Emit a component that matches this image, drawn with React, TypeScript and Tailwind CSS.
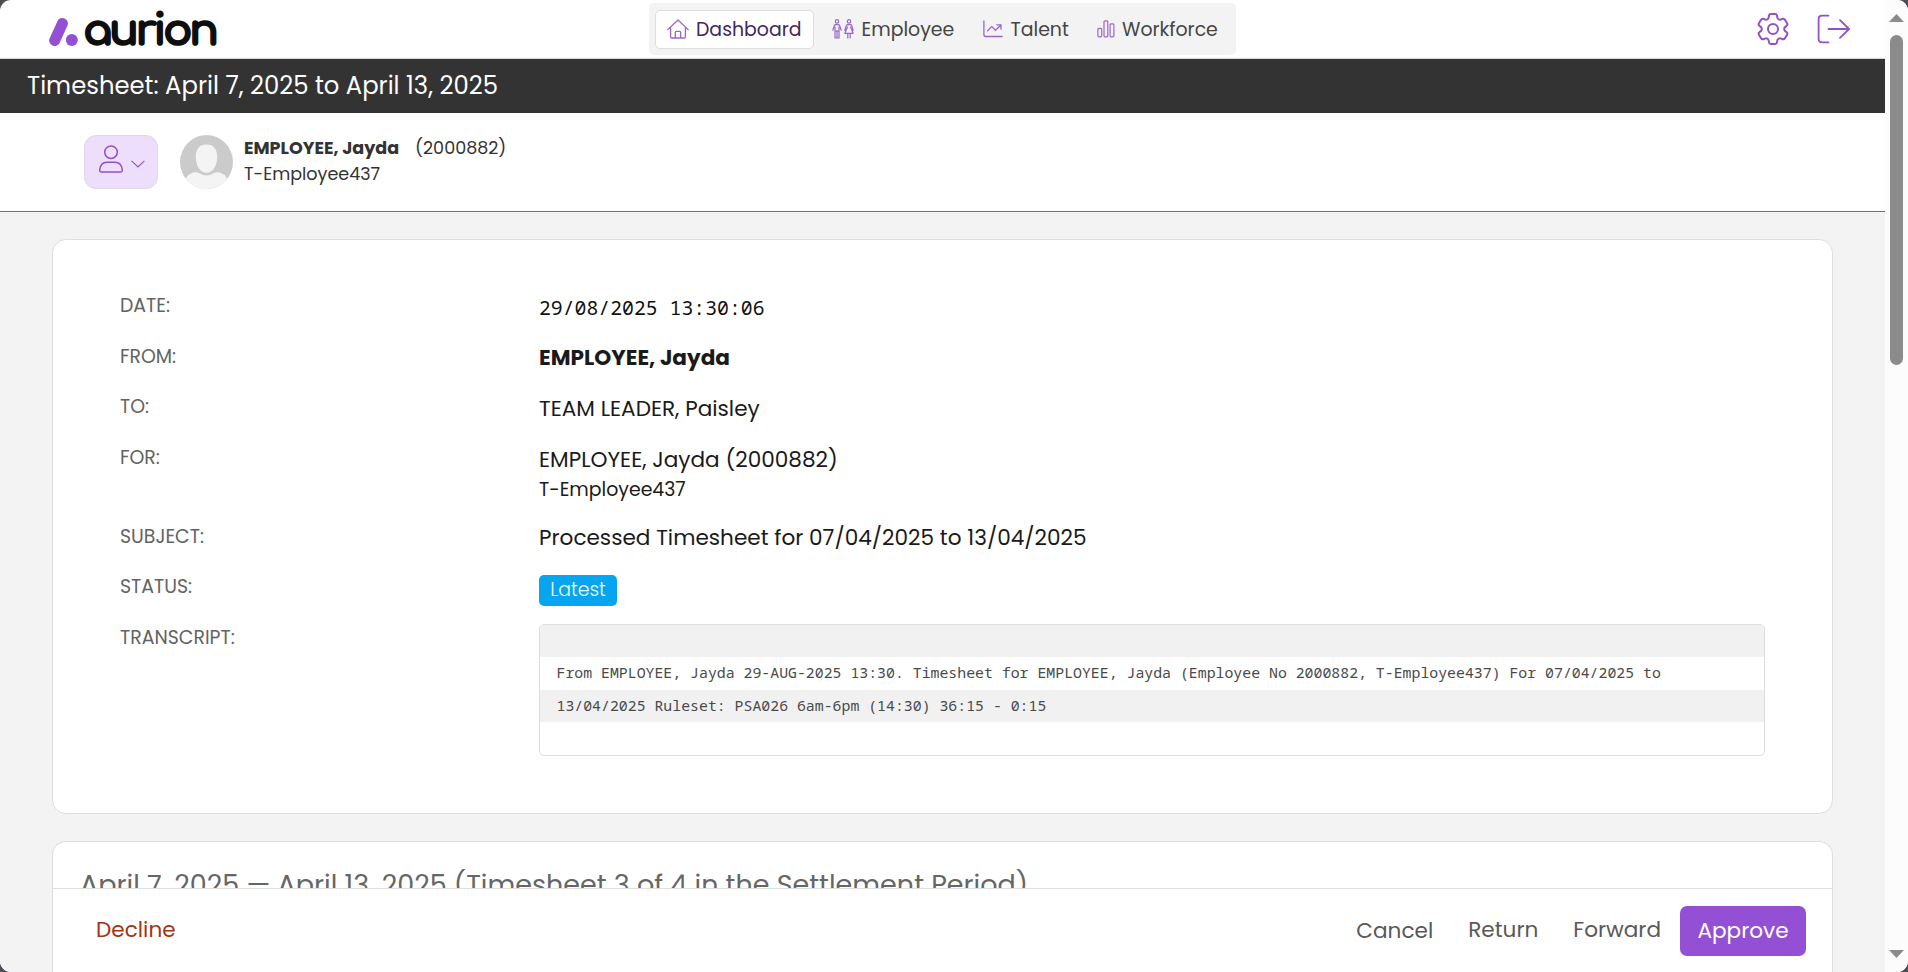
import type { ReactNode } from "react";
import { HiOutlineCog6Tooth } from "react-icons/hi2";

const HomeIcon = () => (
  <svg width="22" height="20" viewBox="0 0 22 20" fill="none" stroke="#9b66cc" strokeWidth="1.3" strokeLinejoin="round" strokeLinecap="round">
    <path d="M.8 10.6 11 1l10.2 9.6M3.6 8.6v9.2q0 1.2 1.2 1.2h12.4q1.2 0 1.2-1.2V8.6M8.3 19v-5.6q0-1 1-1h3.4q1 0 1 1V19" />
  </svg>
);

const PeopleIcon = () => (
  <svg width="22" height="20" viewBox="0 0 22 20" fill="none" stroke="#9b66cc" strokeWidth="1.2" strokeLinejoin="round" strokeLinecap="round">
    <circle cx="5" cy="2.4" r="1.7" />
    <circle cx="17" cy="2.4" r="1.7" />
    <path d="M.8 11.2 2.3 6.6q.4-1 1.4-1h2.6q1 0 1.4 1l1.5 4.6M3 8v11M7 8v11M5 12.4V19M3 12.2h4M3 19h4" />
    <path d="m12.8 11.2 1.5-4.6q.4-1 1.4-1h2.6q1 0 1.4 1l1.5 4.6M15.4 8l-2.6 6.4h8.4L18.6 8M15.8 14.6V19M18.2 14.6V19" />
  </svg>
);

const TrendIcon = () => (
  <svg width="20" height="18" viewBox="0 0 20 18" fill="none" stroke="#9b66cc" strokeWidth="1.3" strokeLinejoin="round" strokeLinecap="round">
    <path d="M.9.9v13.6q0 2 2 2h16.2M4.6 10.8l4-4.2 3.9 3.6L18 5M13.8 4.8H18v4.4" />
  </svg>
);

const BarsIcon = () => (
  <svg width="18" height="18" viewBox="0 0 18 18" fill="none" stroke="#9b66cc" strokeWidth="1.2">
    <rect x=".9" y="8.4" width="3.8" height="8.4" rx="1" />
    <rect x="7" y=".9" width="3.8" height="15.9" rx="1" />
    <rect x="13.1" y="3.9" width="3.8" height="12.9" rx="1" />
  </svg>
);

const LogoutIcon = () => (
  <svg width="34" height="30" viewBox="0 0 34 30" fill="none" stroke="#9450c8" strokeWidth="1.8" strokeLinejoin="round" strokeLinecap="round">
    <path d="M11.5 1.6H5.2q-3.6 0-3.6 3.6v19.6q0 3.6 3.6 3.6h6.3M11.5 15h20.6M23 6.2l9.1 8.8-9.1 8.8" />
  </svg>
);

const PersonIcon = () => (
  <svg width="24" height="28" viewBox="0 0 24 28" fill="none" stroke="#9450c8" strokeWidth="1.5" strokeLinejoin="round">
    <circle cx="12" cy="7.2" r="6.3" />
    <path d="M7.8 17.2h8.4q6 0 7 7.2.4 2.6-1.8 2.6H2.6q-2.2 0-1.8-2.6 1-7.2 7-7.2Z" />
  </svg>
);

const Avatar = () => (
  <svg width="53" height="54" viewBox="0 0 53 54">
    <defs>
      <clipPath id="avatar-clip">
        <ellipse cx="26.5" cy="27" rx="26.5" ry="27" />
      </clipPath>
    </defs>
    <g clipPath="url(#avatar-clip)">
      <rect width="53" height="54" fill="#cbcbcb" />
      <path d="M2 54Q5 40 13 37.4q4-.8 7 1.2 3 2 6.5 2t6.5-2q3-2 7-1.2Q48 40 51 54Z" fill="#f4f4f4" />
      <path d="M26.5 9.500c-7 0-10.700 4.600-10.700 12.200 0 8.600 4.200 16 10.700 16s10.700-7.400 10.700-16c0-7.600-3.700-12.200-10.700-12.200Z" fill="#f4f4f4" />
    </g>
  </svg>
);

const Row = ({ label, className, children }: { label: string; className: string; children: ReactNode }) => (
  <div className={`flex items-start ${className}`}>
    <div className="w-[419px] shrink-0 pt-px text-[18.9px] leading-[28px] text-[#636363]">{label}</div>
    <div className="flex-1 text-[21.6px] leading-[32px] text-[#1a1a1a]">{children}</div>
  </div>
);

export default function App() {
  return (
    <div className="h-[972px] w-[1908px] overflow-hidden bg-[#4c4c52] font-['Poppins',Inter,sans-serif]">
      <div className="flex h-full w-full overflow-hidden rounded-[11px] bg-white">
        <div className="flex h-full w-[1885px] flex-col">
          <header className="flex h-[59px] shrink-0 items-center border-b border-[#d6d6d6]">
            <div className="flex h-full w-[649px] items-center gap-[5px] pl-[49px]">
              <svg width="29" height="30" viewBox="0 0 29 30" className="mt-[6px]">
                <path d="M13.4 6.5 5.7 23.5" stroke="#9450d4" strokeWidth="11" strokeLinecap="round" />
                <circle cx="22.8" cy="23" r="6" fill="#9450d4" />
              </svg>
              <span className="mt-[4px] text-[44px] leading-[44px] font-bold tracking-[-3.6px] text-[#0e0e0e] [-webkit-text-stroke:1.6px_#0e0e0e] font-['Comfortaa','Quicksand',sans-serif]">
                aurion
              </span>
            </div>
            <nav className="flex h-[52px] w-[587px] items-center rounded-[5px] bg-[#f3f3f3] pl-[6px] text-[18.9px] text-[#444] [&_span]:mt-[2px]">
              <div className="flex h-[39px] w-[159px] items-center gap-[7px] rounded-[5px] border border-[#dedede] bg-white pl-[11px] text-[#44265c]">
                <HomeIcon />
                <span>Dashboard</span>
              </div>
              <div className="ml-[6px] flex w-[146px] items-center gap-[7.5px] pl-[12px]">
                <PeopleIcon />
                <span>Employee</span>
              </div>
              <div className="ml-[5px] flex w-[109px] items-center gap-[7.5px] pl-[12px]">
                <TrendIcon />
                <span>Talent</span>
              </div>
              <div className="ml-[5px] flex items-center gap-[7px] pl-[12px]">
                <BarsIcon />
                <span>Workforce</span>
              </div>
            </nav>
            <div className="flex flex-1 items-center justify-end gap-[24px] pr-[34px]">
              <HiOutlineCog6Tooth className="size-[40px] text-[#9450c8] [&_path]:[stroke-width:1.2]" />
              <LogoutIcon />
            </div>
          </header>

          <h1 className="flex h-[54px] shrink-0 items-center bg-[#333] pl-[27px] text-[24.3px] text-white">
            Timesheet: April 7, 2025 to April 13, 2025
          </h1>

          <section className="flex h-[99px] shrink-0 items-center border-b border-[#85639f] bg-white pl-[84px]">
            <button className="flex h-[54px] w-[74px] items-center gap-[8px] rounded-[12px] border border-[#dfd8e8] bg-[#eddffb] pl-[14px]">
              <span className="mb-[7px]">
                <PersonIcon />
              </span>
              <svg width="14" height="8" viewBox="0 0 14 8" fill="none" stroke="#9450c8" strokeWidth="1.1" className="mt-[4px]">
                <path d="m.6.8 6.4 6.2L13.4.8" />
              </svg>
            </button>
            <div className="ml-[22px]">
              <Avatar />
            </div>
            <div className="mb-[2px] ml-[11px] text-[17.55px] leading-[26px] text-[#333]">
              <div className="flex gap-[16px]">
                <span className="font-bold">EMPLOYEE, Jayda</span>
                <span>(2000882)</span>
              </div>
              <div>T-Employee437</div>
            </div>
          </section>

          <main className="flex min-h-0 flex-1 flex-col gap-[27px] bg-[#f3f3f3] px-[52px] pt-[27px]">
            <section className="h-[575px] shrink-0 rounded-[14px] border border-[#dedede] bg-white px-[67px] pt-[51px]">
              <Row label="DATE:" className="h-[51px]">
                <span className="block pt-px font-['Noto_Sans_Mono','DejaVu_Sans_Mono',monospace] text-[19.8px] text-[#111]">29/08/2025 13:30:06</span>
              </Row>
              <Row label="FROM:" className="h-[50px]">
                <span className="font-bold">EMPLOYEE, Jayda</span>
              </Row>
              <Row label="TO:" className="h-[51px]">
                <div className="pt-px">TEAM LEADER, Paisley</div>
              </Row>
              <Row label="FOR:" className="h-[79px]">
                <div className="pt-px">EMPLOYEE, Jayda (2000882)</div>
                <div className="text-[18.9px] leading-[28px]">T-Employee437</div>
              </Row>
              <Row label="SUBJECT:" className="h-[50px]">Processed Timesheet for 07/04/2025 to 13/04/2025</Row>
              <Row label="STATUS:" className="h-[51px]">
                <div className="mt-[3px] flex h-[31px] w-[78px] justify-center rounded-[5px] bg-[#08a5ef] text-[18.9px] leading-[30px] font-light text-[#f2fdff]">
                  Latest
                </div>
              </Row>
              <Row label="TRANSCRIPT:" className="h-[133px]">
                <div className="mt-px grid h-[132px] grid-rows-[32px_33px_32px_33px] overflow-hidden rounded-[5px] border border-[#dedede] font-['Noto_Sans_Mono','DejaVu_Sans_Mono',monospace] text-[14.85px] text-[#4a4a4a] [&>div]:pl-[16.5px] [&>div]:leading-[31px]">
                  <div className="bg-[#f1f1f1]" />
                  <div className="whitespace-nowrap">
                    From EMPLOYEE, Jayda 29-AUG-2025 13:30. Timesheet for EMPLOYEE, Jayda (Employee No 2000882, T-Employee437) For 07/04/2025 to
                  </div>
                  <div className="bg-[#f1f1f1]">13/04/2025 Ruleset: PSA026 6am-6pm (14:30) 36:15 - 0:15</div>
                  <div />
                </div>
              </Row>
            </section>

            <section className="flex min-h-0 flex-1 flex-col overflow-hidden rounded-t-[14px] border border-b-0 border-[#dedede] bg-white">
              <div className="h-[46px] shrink-0 overflow-hidden pt-[22px] pl-[27px] text-[27px] leading-[41px] text-[#666]">
                April 7, 2025 — April 13, 2025 (Timesheet 3 of 4 in the Settlement Period)
              </div>
              <div className="flex flex-1 items-start border-t border-[#dedede] pt-[17px] pr-[26px] pl-[43px] text-[21.6px] leading-[50px] text-[#595959]">
                <span className="-mt-px mr-auto text-[#a8330f]">Decline</span>
                <span>Cancel</span>
                <span className="-mt-px ml-[35px]">Return</span>
                <span className="-mt-px ml-[35px]">Forward</span>
                <span className="ml-[19px] h-[50px] w-[126px] rounded-[7px] bg-[#9450d4] text-center text-white">Approve</span>
              </div>
            </section>
          </main>
        </div>

        <div className="flex h-full w-[23px] flex-col items-center bg-[#fcfcfc] py-[14px]">
          <svg width="15" height="8" viewBox="0 0 15 8">
            <path d="M7.5 0 15 8H0Z" fill="#8b8b8b" />
          </svg>
          <div className="mt-[13px] h-[330px] w-[13px] rounded-full bg-[#8b8b8b]" />
          <svg width="15" height="8" viewBox="0 0 15 8" className="mt-auto">
            <path d="M7.5 8 0 0h15Z" fill="#8b8b8b" />
          </svg>
        </div>
      </div>
    </div>
  );
}
